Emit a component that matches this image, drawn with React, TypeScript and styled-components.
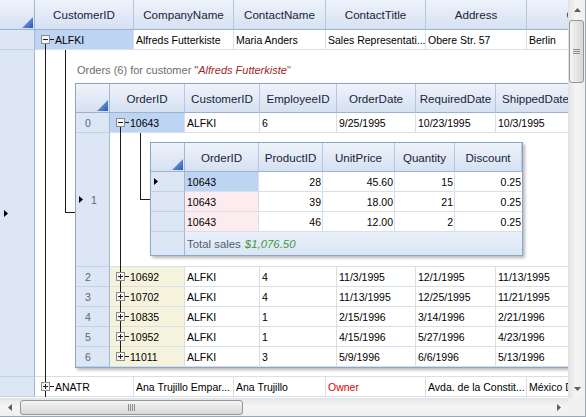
import React from 'react';
import styled, { createGlobalStyle } from 'styled-components';

const GRID_LINE = '#d9dfe8';
const IND_BG = '#dce6f4';
const SELECTED = '#bdd4f2';
const PINK = '#fcecee';
const YELLOW = '#f6f3dc';
const TREE = '#1c1c1c';
const HEAD_BG = 'linear-gradient(#eef3fb, #e1e9f6 55%, #d5e1f2)';

const GlobalStyle = createGlobalStyle`
  html, body { margin: 0; padding: 0; background: #fff; }
  * { box-sizing: border-box; }
`;

const Frame = styled.div`
  width: 586px;
  height: 417px;
  display: grid;
  grid-template-columns: 568px 17px;
  grid-template-rows: 398px 18px;
  border-right: 1px solid #9aa8ba;
  border-bottom: 1px solid #9aa8ba;
  font-family: "Liberation Sans", Arial, sans-serif;
  color: #000;
  overflow: hidden;
`;

const Viewport = styled.div`
  overflow: hidden;
  display: flex;
  flex-direction: column;
  background: #fff;
`;

const Row = styled.div<{ $h?: number }>`
  display: flex;
  flex-shrink: 0;
  height: ${({ $h }) => $h ?? 20}px;
`;

const HeadIndicator = styled.div<{ $w: number }>`
  width: ${({ $w }) => $w}px;
  flex-shrink: 0;
  display: flex;
  align-items: flex-end;
  justify-content: flex-end;
  padding: 0 1px 1px 0;
  background: ${HEAD_BG};
  border-right: 1px solid #a2b7d3;
  border-bottom: 1px solid #9bb2d0;
`;

const HeaderCell = styled.div<{ $w: number }>`
  width: ${({ $w }) => $w}px;
  flex-shrink: 0;
  display: flex;
  align-items: center;
  justify-content: center;
  background: ${HEAD_BG};
  border-right: 1px solid #b6c7de;
  border-bottom: 1px solid #9bb2d0;
  font-size: 11.6px;
  color: #18243a;
  white-space: nowrap;
  overflow: hidden;
`;

const Indicator = styled.div<{ $w: number; $pl?: number; $flat?: boolean }>`
  width: ${({ $w }) => $w}px;
  flex-shrink: 0;
  display: flex;
  align-items: center;
  padding-left: ${({ $pl }) => $pl ?? 4}px;
  background: ${IND_BG};
  border-right: 1px solid #a2b7d3;
  border-bottom: ${({ $flat }) => ($flat ? 'none' : '1px solid #c3d1e4')};
  font-size: 10.5px;
  color: #5a6578;
`;

const Cell = styled.div<{ $w: number; $right?: boolean; $bg?: string; $color?: string; $last?: boolean }>`
  width: ${({ $w }) => $w}px;
  flex-shrink: 0;
  display: flex;
  align-items: center;
  justify-content: ${({ $right }) => ($right ? 'flex-end' : 'flex-start')};
  padding: ${({ $right }) => ($right ? '0 1px 0 0' : '0 0 0 2px')};
  background: ${({ $bg }) => $bg ?? '#fff'};
  color: ${({ $color }) => $color ?? '#000'};
  border-right: ${({ $last }) => ($last ? 'none' : `1px solid ${GRID_LINE}`)};
  border-bottom: 1px solid ${GRID_LINE};
  font-size: 10.5px;
  white-space: nowrap;
  overflow: hidden;
`;

const TreeCell = styled(Cell)`
  align-items: stretch;
  padding-left: 6px;
  overflow: visible;
`;

const Expander = styled.div`
  width: 9px;
  flex-shrink: 0;
  display: flex;
  flex-direction: column;
  align-items: center;
`;

const Stub = styled.div<{ $on: boolean; $top?: boolean }>`
  flex: 1;
  width: 1px;
  background: ${({ $on }) => ($on ? TREE : 'transparent')};
  margin-top: ${({ $top }) => ($top ? -1 : 0)}px;
  margin-bottom: ${({ $top }) => ($top ? 0 : -1)}px;
`;

const Dash = styled.div`
  width: 4px;
  height: 1px;
  align-self: center;
  background: ${TREE};
`;

const TreeText = styled.span`
  align-self: center;
  padding-left: 1px;
`;

const DetailRow = styled.div`
  display: flex;
  flex-shrink: 0;
`;

const Gutter = styled.div`
  width: 40px;
  flex-shrink: 0;
  display: flex;
  padding-left: 10px;
  border-bottom: 1px solid ${GRID_LINE};
`;

const Trunk = styled.div`
  width: 20px;
  border-left: 1px solid ${TREE};
  margin-bottom: -1px;
`;

const Branch = styled.div`
  width: 10px;
  height: 50%;
  border-left: 1px solid ${TREE};
  border-bottom: 1px solid ${TREE};
`;

const DetailBody = styled.div<{ $pt: number; $pb: number }>`
  flex: 1;
  min-width: 0;
  display: flex;
  flex-direction: column;
  align-items: flex-start;
  padding: ${({ $pt, $pb }) => `${$pt}px 0 ${$pb}px 0`};
  border-bottom: 1px solid ${GRID_LINE};
  background: #fff;
`;

const Caption = styled.div`
  height: 26px;
  display: flex;
  align-items: center;
  padding-left: 2px;
  font-size: 11px;
  color: #6e6e6e;
  white-space: nowrap;
`;

const CaptionName = styled.span`
  color: #9b2a2a;
  font-style: italic;
`;

const Quote = styled.span`
  color: #9b2a2a;
`;

const Nested = styled.div`
  flex-shrink: 0;
  display: flex;
  flex-direction: column;
  border: 1px solid #8ea6c6;
  background: #fff;
  box-shadow: 2px 2px 3px rgba(0, 0, 0, 0.28);
`;

const Number = styled.span<{ $ml?: number }>`
  margin-left: ${({ $ml }) => $ml ?? 0}px;
`;

const FooterCell = styled.div`
  flex: 1;
  display: flex;
  align-items: center;
  padding-left: 2px;
  background: linear-gradient(#e9f0f9, #dbe6f4);
  font-size: 11.4px;
  color: #4e5d72;
  white-space: nowrap;
`;

const Money = styled.span`
  margin-left: 4px;
  color: #3d9a3d;
  font-style: italic;
`;

const VScroll = styled.div`
  display: flex;
  flex-direction: column;
  border-left: 1px solid #e2e2e2;
  background: linear-gradient(90deg, #e6e6e6, #f5f5f5 45%, #efefef);
`;

const HScroll = styled.div`
  display: flex;
  border-top: 1px solid #e2e2e2;
  background: linear-gradient(#e6e6e6, #f5f5f5 45%, #efefef);
`;

const ScrollButton = styled.div<{ $size: number; $vertical?: boolean }>`
  flex-shrink: 0;
  ${({ $size, $vertical }) => ($vertical ? `height: ${$size}px;` : `width: ${$size}px;`)}
  display: flex;
  align-items: center;
  justify-content: center;
`;

const Track = styled.div`
  flex: 1;
`;

const Thumb = styled.div<{ $vertical?: boolean; $len: number }>`
  flex-shrink: 0;
  ${({ $vertical, $len }) =>
    $vertical ? `height: ${$len}px; margin: 1px 1px 0 0;` : `width: ${$len}px; margin: 1px 0 1px 1px;`}
  display: flex;
  align-items: center;
  justify-content: center;
  border: 1px solid #979797;
  border-radius: 3px;
  background: ${({ $vertical }) =>
    $vertical
      ? 'linear-gradient(90deg, #f4f4f4, #e6e6e6 50%, #d7d7d7)'
      : 'linear-gradient(#f4f4f4, #e6e6e6 50%, #d7d7d7)'};
`;

const ScrollCorner = styled.div`
  background: #f0f0f0;
`;

type Col = { title: string; w: number; right?: boolean; last?: boolean };

const mainCols: Col[] = [
  { title: 'CustomerID', w: 99 },
  { title: 'CompanyName', w: 100 },
  { title: 'ContactName', w: 92 },
  { title: 'ContactTitle', w: 100 },
  { title: 'Address', w: 101 },
  { title: 'City', w: 100 },
];

const orderCols: Col[] = [
  { title: 'OrderID', w: 75 },
  { title: 'CustomerID', w: 75 },
  { title: 'EmployeeID', w: 77 },
  { title: 'OrderDate', w: 79 },
  { title: 'RequiredDate', w: 80 },
  { title: 'ShippedDate', w: 80 },
];

const detailCols: Col[] = [
  { title: 'OrderID', w: 74 },
  { title: 'ProductID', w: 64, right: true },
  { title: 'UnitPrice', w: 72, right: true },
  { title: 'Quantity', w: 60, right: true },
  { title: 'Discount', w: 67, right: true, last: true },
];

const orders = [
  ['10692', 'ALFKI', '4', '11/3/1995', '12/1/1995', '11/13/1995'],
  ['10702', 'ALFKI', '4', '11/13/1995', '12/25/1995', '11/21/1995'],
  ['10835', 'ALFKI', '1', '2/15/1996', '3/14/1996', '2/21/1996'],
  ['10952', 'ALFKI', '1', '4/15/1996', '5/27/1996', '4/23/1996'],
  ['11011', 'ALFKI', '3', '5/9/1996', '6/6/1996', '5/13/1996'],
];

const details = [
  ['10643', '28', '45.60', '15', '0.25'],
  ['10643', '39', '18.00', '21', '0.25'],
  ['10643', '46', '12.00', '2', '0.25'],
];

const HeaderTriangle = () => (
  <svg width="11" height="11" viewBox="0 0 11 11" style={{ display: 'block' }}>
    <defs>
      <linearGradient id="hdrTri" x1="0" y1="0" x2="1" y2="1">
        <stop offset="0" stopColor="#9bbcec" />
        <stop offset="1" stopColor="#2556b5" />
      </linearGradient>
    </defs>
    <polygon points="11,0 11,11 0,11" fill="url(#hdrTri)" />
  </svg>
);

const RowArrow = () => (
  <svg width="4" height="7" viewBox="0 0 4 7" style={{ display: 'block', flexShrink: 0 }}>
    <polygon points="0,0 4,3.5 0,7" fill="#000" />
  </svg>
);

const ExpanderBox = ({ open }: { open: boolean }) => (
  <svg width="9" height="9" viewBox="0 0 9 9" style={{ display: 'block', flexShrink: 0 }}>
    <rect x="0.5" y="0.5" width="8" height="8" fill="#f5f5f5" stroke="#8b8b8b" />
    <path d="M2 4.5H7" stroke="#222" />
    {!open && <path d="M4.5 2V7" stroke="#222" />}
  </svg>
);

const ScrollArrow = ({ dir }: { dir: 'up' | 'down' | 'left' | 'right' }) => {
  const pts = {
    up: '0,4 3.5,0 7,4',
    down: '0,0 7,0 3.5,4',
    left: '4,0 4,7 0,3.5',
    right: '0,0 4,3.5 0,7',
  }[dir];
  const vertical = dir === 'up' || dir === 'down';
  return (
    <svg width={vertical ? 7 : 4} height={vertical ? 4 : 7} style={{ display: 'block' }}>
      <polygon points={pts} fill="#5e5e5e" />
    </svg>
  );
};

const Grip = ({ vertical }: { vertical?: boolean }) =>
  vertical ? (
    <svg width="7" height="6" style={{ display: 'block' }}>
      <path d="M0 0.5H7M0 2.5H7M0 4.5H7" stroke="#8a8a8a" />
    </svg>
  ) : (
    <svg width="8" height="7" style={{ display: 'block' }}>
      <path d="M0.5 0V7M2.5 0V7M4.5 0V7M6.5 0V7" stroke="#8a8a8a" />
    </svg>
  );

function TreeNode({
  w,
  text,
  open,
  top,
  bottom,
  bg,
}: {
  w: number;
  text: string;
  open: boolean;
  top: boolean;
  bottom: boolean;
  bg?: string;
}) {
  return (
    <TreeCell $w={w} $bg={bg}>
      <Expander>
        <Stub $on={top} $top />
        <ExpanderBox open={open} />
        <Stub $on={bottom} />
      </Expander>
      <Dash />
      <TreeText>{text}</TreeText>
    </TreeCell>
  );
}

function HeaderRow({ cols, h, ind }: { cols: Col[]; h: number; ind: number }) {
  return (
    <Row $h={h}>
      <HeadIndicator $w={ind}>
        <HeaderTriangle />
      </HeadIndicator>
      {cols.map((c) => (
        <HeaderCell key={c.title} $w={c.w}>
          {c.title}
        </HeaderCell>
      ))}
    </Row>
  );
}

function OrderDetails() {
  return (
    <Nested>
      <HeaderRow cols={detailCols} h={29} ind={34} />
      {details.map((d, i) => (
        <Row key={i}>
          <Indicator $w={34} $pl={3}>
            {i === 0 && <RowArrow />}
          </Indicator>
          {d.map((v, j) => (
            <Cell
              key={j}
              $w={detailCols[j].w}
              $right={detailCols[j].right}
              $last={detailCols[j].last}
              $bg={j === 0 ? (i === 0 ? SELECTED : PINK) : undefined}
            >
              {v}
            </Cell>
          ))}
        </Row>
      ))}
      <Row $h={23}>
        <Indicator $w={34} $flat />
        <FooterCell>
          Total sales <Money>$1,076.50</Money>
        </FooterCell>
      </Row>
    </Nested>
  );
}

function OrdersGrid() {
  return (
    <Nested>
      <HeaderRow cols={orderCols} h={29} ind={34} />
      <Row>
        <Indicator $w={34} $pl={9}>0</Indicator>
        <TreeNode w={75} text="10643" open top={false} bottom bg={SELECTED} />
        {['ALFKI', '6', '9/25/1995', '10/23/1995', '10/3/1995'].map((v, j) => (
          <Cell key={j} $w={orderCols[j + 1].w}>
            {v}
          </Cell>
        ))}
      </Row>
      <DetailRow>
        <Indicator $w={34} $pl={3}>
          <RowArrow />
          <Number $ml={8}>1</Number>
        </Indicator>
        <Gutter>
          <Trunk />
          <Branch />
        </Gutter>
        <DetailBody $pt={9} $pb={10}>
          <OrderDetails />
        </DetailBody>
      </DetailRow>
      {orders.map((o, i) => (
        <Row key={o[0]}>
          <Indicator $w={34} $pl={9}>{i + 2}</Indicator>
          <TreeNode w={75} text={o[0]} open={false} top bottom={i < orders.length - 1} bg={YELLOW} />
          {o.slice(1).map((v, j) => (
            <Cell key={j} $w={orderCols[j + 1].w}>
              {v}
            </Cell>
          ))}
        </Row>
      ))}
    </Nested>
  );
}

export default function App() {
  return (
    <>
      <GlobalStyle />
      <Frame>
        <Viewport>
          <HeaderRow cols={mainCols} h={30} ind={35} />
          <Row>
            <Indicator $w={35} />
            <TreeNode w={99} text="ALFKI" open top={false} bottom bg={SELECTED} />
            {['Alfreds Futterkiste', 'Maria Anders', 'Sales Representati...', 'Obere Str. 57', 'Berlin'].map(
              (v, j) => (
                <Cell key={j} $w={mainCols[j + 1].w}>
                  {v}
                </Cell>
              ),
            )}
          </Row>
          <DetailRow>
            <Indicator $w={35}>
              <RowArrow />
            </Indicator>
            <Gutter>
              <Trunk />
              <Branch />
            </Gutter>
            <DetailBody $pt={7} $pb={8}>
              <Caption>
                Orders (6) for customer&nbsp;<Quote>"</Quote>
                <CaptionName>Alfreds Futterkiste</CaptionName>"
              </Caption>
              <OrdersGrid />
            </DetailBody>
          </DetailRow>
          <Row>
            <Indicator $w={35} />
            <TreeNode w={99} text="ANATR" open={false} top bottom />
            <Cell $w={100}>Ana Trujillo Empar...</Cell>
            <Cell $w={92}>Ana Trujillo</Cell>
            <Cell $w={100} $color="#e60000">
              Owner
            </Cell>
            <Cell $w={101}>Avda. de la Constit...</Cell>
            <Cell $w={100}>México D.F.</Cell>
          </Row>
        </Viewport>
        <VScroll>
          <ScrollButton $vertical $size={19}>
            <ScrollArrow dir="up" />
          </ScrollButton>
          <Thumb $vertical $len={63}>
            <Grip vertical />
          </Thumb>
          <Track />
          <ScrollButton $vertical $size={18}>
            <ScrollArrow dir="down" />
          </ScrollButton>
        </VScroll>
        <HScroll>
          <ScrollButton $size={19}>
            <ScrollArrow dir="left" />
          </ScrollButton>
          <Thumb $len={223}>
            <Grip />
          </Thumb>
          <Track />
          <ScrollButton $size={18}>
            <ScrollArrow dir="right" />
          </ScrollButton>
        </HScroll>
        <ScrollCorner />
      </Frame>
    </>
  );
}
